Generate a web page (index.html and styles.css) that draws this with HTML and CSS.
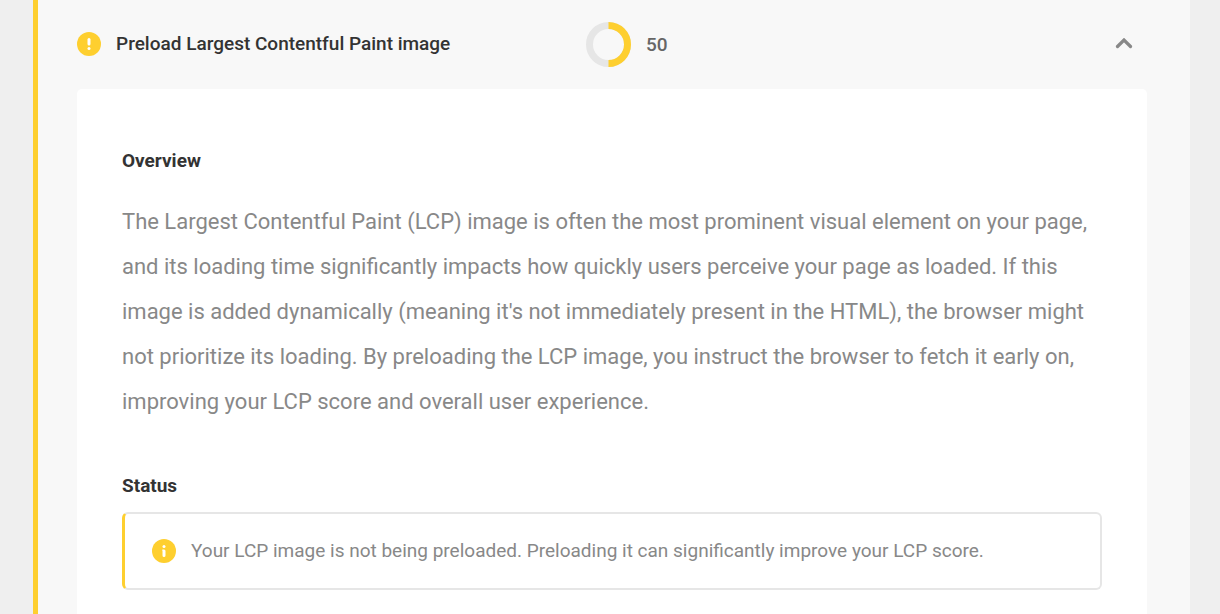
FILE: index.html
```html
<!DOCTYPE html>
<html lang="en">
<head>
    <meta charset="UTF-8">
    <meta name="viewport" content="width=device-width, initial-scale=1.0">
    <title>Preload Largest Contentful Paint image</title>
    <link rel="stylesheet" href="styles.css">
</head>
<body>
    <section class="audit">
        <header class="audit-header">
            <div class="audit-title">
                <svg class="icon" viewBox="0 0 24 24" aria-hidden="true">
                    <circle cx="12" cy="12" r="12" fill="#fecf2f"/>
                    <path d="M12 7.500v4.500" fill="none" stroke="#fff" stroke-width="3" stroke-linecap="round"/>
                    <circle cx="12" cy="16.600" r="1.500" fill="#fff"/>
                </svg>
                <h2>Preload Largest Contentful Paint image</h2>
            </div>
            <div class="audit-score">
                <svg class="score-ring" viewBox="0 0 45 45" aria-hidden="true">
                    <circle cx="22.500" cy="22.500" r="19" fill="none" stroke="#e6e6e6" stroke-width="7"/>
                    <path d="M22.500 3.500a19 19 0 0 1 0 38" fill="none" stroke="#fecf2f" stroke-width="7"/>
                </svg>
                <span>50</span>
            </div>
            <button class="toggle" type="button" aria-label="Collapse" aria-expanded="true">
                <svg viewBox="0 0 18 12" aria-hidden="true">
                    <path d="M2.500 8.500L9 2l6.500 6.500" fill="none" stroke="#888" stroke-width="3.200" stroke-linecap="round"/>
                </svg>
            </button>
        </header>
        <div class="audit-body">
            <h3>Overview</h3>
            <p class="overview">The Largest Contentful Paint (LCP) image is often the most prominent visual element on your page, and its loading time significantly impacts how quickly users perceive your page as loaded. If this image is added dynamically (meaning it's not immediately present in the HTML), the browser might not prioritize its loading. By preloading the LCP image, you instruct the browser to fetch it early on, improving your LCP score and overall user experience.</p>
            <h3>Status</h3>
            <div class="notice">
                <svg class="icon" viewBox="0 0 24 24" aria-hidden="true">
                    <circle cx="12" cy="12" r="12" fill="#fecf2f"/>
                    <circle cx="12" cy="7.500" r="1.500" fill="#fff"/>
                    <path d="M10.300 10.500H12a1.500 1.500 0 0 1 1.500 1.500v4.500a1.500 1.500 0 0 1-3 0V12h-.2z" fill="#fff"/>
                </svg>
                <p>Your LCP image is not being preloaded. Preloading it can significantly improve your LCP score.</p>
            </div>
        </div>
    </section>
</body>
</html>
```

FILE: styles.css
```css
* {
    box-sizing: border-box;
}
body {
    margin: 0;
    padding: 0 30px 0 33px;
    background-color: #efefef;
    font-family: Roboto, sans-serif;
    color: #333;
}
.audit {
    padding: 0 43px 0 39px;
    min-height: 100vh;
    background-color: #f8f8f8;
    border-left: 5px solid #fecf2f;
}
.audit-header {
    display: grid;
    grid-template-columns: 1fr 1fr 52px;
    align-items: center;
    height: 89px;
    padding-bottom: 1px;
}
.audit-title,
.audit-score,
.notice {
    display: flex;
    align-items: center;
    gap: 15px;
}
h2,
h3 {
    margin: 0;
    font-size: 19px;
    line-height: 30px;
    font-weight: 500;
}
h3 {
    font-weight: 700;
}
.audit-score {
    font-size: 19px;
    font-weight: 500;
    color: #666;
}
.icon {
    flex: none;
    width: 24px;
    height: 24px;
}
.score-ring {
    width: 45px;
    height: 45px;
}
.toggle {
    justify-self: end;
    width: 46px;
    padding: 0;
    border: 0;
    background: none;
    cursor: pointer;
}
.toggle svg {
    display: block;
    width: 18px;
    height: 12px;
    margin: 0 auto;
}
.audit-body {
    padding: 57px 45px 24px;
    background-color: #fff;
    border-radius: 5px 5px 0 0;
}
.overview {
    margin: 23px 0 47px;
    font-size: 22px;
    line-height: 45px;
    color: #888;
}
.notice {
    margin-top: 11px;
    padding: 22px 27px;
    border: 2px solid #e6e6e6;
    border-left: 3px solid #fecf2f;
    border-radius: 6px;
}
.notice p {
    margin: 0;
    font-size: 19px;
    line-height: 30px;
    color: #888;
}
```
